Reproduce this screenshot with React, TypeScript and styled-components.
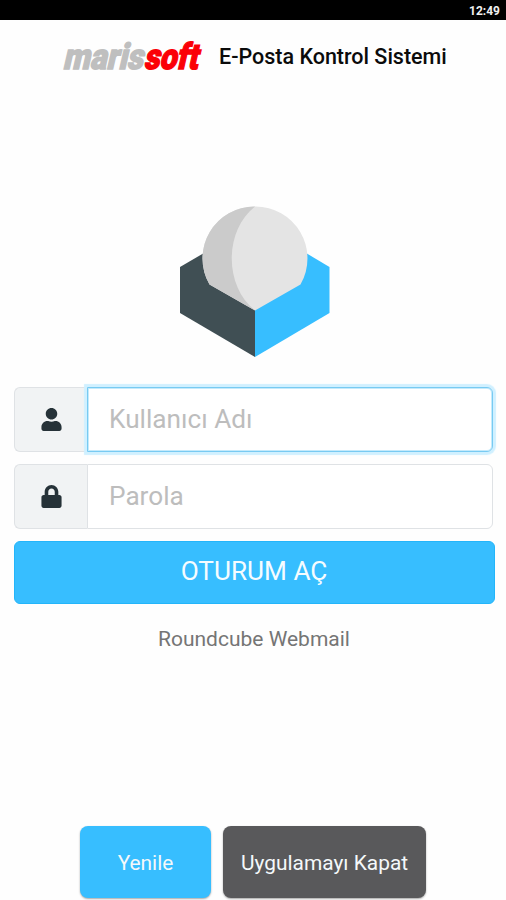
import React from 'react';
import styled, { createGlobalStyle, css } from 'styled-components';
import { FaLock, FaUser } from 'react-icons/fa';

const GlobalStyle = createGlobalStyle`
  *, *::before, *::after { box-sizing: border-box; }
  html, body { margin: 0; background: #fefefe; }
  body { font-family: Roboto, "Liberation Sans", sans-serif; }
`;

const Screen = styled.div`
  display: flex;
  flex-direction: column;
  height: 900px;
  width: 506px;
  overflow: hidden;
  background: #fefefe;
`;

const StatusBar = styled.div`
  display: flex;
  flex: none;
  justify-content: flex-end;
  height: 20px;
  padding-right: 6px;
  background: #000;
  color: #f0f0f0;
  font-size: 12px;
  font-weight: 700;
  line-height: 22px;
`;

const Header = styled.header`
  display: flex;
  flex: none;
  height: 74px;
  padding-left: 60px;
`;

const BrandLogo = styled.svg`
  display: block;
  flex: none;
  width: 146px;
  height: 74px;
  margin-right: 13px;
  overflow: visible;
  font-family: Roboto, sans-serif;
  font-weight: 900;
`;

const Title = styled.h1`
  margin: 0;
  color: #0b0b0b;
  font-size: 21.5px;
  font-weight: 500;
  line-height: 74px;
  white-space: nowrap;
`;

const Emblem = styled.svg`
  display: block;
  flex: none;
  width: 150px;
  height: 152px;
  margin: 112px 0 0 180px;
`;

const LoginForm = styled.form`
  display: flex;
  flex: none;
  flex-direction: column;
  gap: 12px;
  margin: 29px 11px 0 14px;
`;

const Field = styled.div`
  display: flex;
  width: 479px;
  height: 65px;
`;

const FieldIcon = styled.span`
  display: flex;
  align-items: center;
  justify-content: center;
  width: 73px;
  padding-left: 1px;
  border: 1px solid #dfe2e5;
  border-right: 0;
  border-radius: 6px 0 0 6px;
  background: #f1f3f4;
  color: #263238;
  font-size: 23px;
`;

const Input = styled.input<{ $active?: boolean }>`
  flex: 1;
  min-width: 0;
  height: 100%;
  padding: 0 21px 1px;
  border: 1px solid #dfe2e5;
  border-radius: 0 6px 6px 0;
  outline: 0;
  background: #fff;
  font: 400 26.2px Roboto, sans-serif;

  &::placeholder { color: #bdbdbd; opacity: 1; }

  ${({ $active }) => $active && css`
    border-color: #78caf2;
    box-shadow: 0 0 1px 3px #d0f0ff, inset 0 0 0 1px #c4eafb;
  `}
`;

const SubmitButton = styled.button`
  height: 63px;
  padding: 0 1px 3px 0;
  border: 1px solid #23b5fa;
  border-radius: 6px;
  background: #37beff;
  color: #f5fcff;
  font: 400 26.2px Roboto, sans-serif;
`;

const ProductName = styled.p`
  flex: none;
  margin: 21px 0 0;
  padding-left: 2px;
  color: #757575;
  font-size: 21px;
  line-height: 28px;
  text-align: center;
`;

const Actions = styled.footer`
  display: flex;
  flex: none;
  gap: 12px;
  margin: auto 0 2px 80px;
`;

const ActionButton = styled.button<{ $dark?: boolean }>`
  width: ${({ $dark }) => ($dark ? '203px' : '131px')};
  height: 72px;
  padding: 2px 0 0;
  border: 0;
  border-radius: 8px;
  background: ${({ $dark }) => ($dark ? '#59595b' : '#37beff')};
  box-shadow: 0 1px 2px rgba(0, 0, 0, 0.35);
  color: #f4f8fa;
  font: 400 20.9px Roboto, sans-serif;
  white-space: nowrap;
`;

export default function App() {
  return (
    <>
      <GlobalStyle />
      <Screen>
        <StatusBar>12:49</StatusBar>
        <Header>
          <BrandLogo viewBox="0 0 146 74" role="img" aria-label="marissoft">
            <g transform="translate(2.5 49) skewX(-13)" fontSize="36" strokeWidth="1.4">
              <text fill="#bfbfbf" stroke="#bfbfbf" textLength="80" lengthAdjust="spacingAndGlyphs">maris</text>
              <text x="81" fill="#fb0007" stroke="#fb0007" textLength="54" lengthAdjust="spacingAndGlyphs">soft</text>
            </g>
          </BrandLogo>
          <Title>E-Posta Kontrol Sistemi</Title>
        </Header>
        <Emblem viewBox="0 0 150 152" aria-hidden="true">
          <path fill="#404f54" d="M0 61 24 47 75 62V151L0 107Z" />
          <path fill="#37beff" d="M149.5 61 126 47 75 62V151L149.5 107Z" />
          <path fill="#e4e4e4" d="M75 .5A52 52 0 0 1 120.5 78.5L75 104.5 29.5 78.5A52 52 0 0 1 75 .5Z" />
          <path fill="#cbcbcb" d="M75 .5C44 25 44 80 75 104.5L29.5 78.5A52 52 0 0 1 75 .5Z" />
        </Emblem>
        <LoginForm onSubmit={(event) => event.preventDefault()}>
          <Field>
            <FieldIcon><FaUser /></FieldIcon>
            <Input $active placeholder="Kullanıcı Adı" aria-label="Kullanıcı Adı" />
          </Field>
          <Field>
            <FieldIcon><FaLock /></FieldIcon>
            <Input type="password" placeholder="Parola" aria-label="Parola" />
          </Field>
          <SubmitButton>OTURUM AÇ</SubmitButton>
        </LoginForm>
        <ProductName>Roundcube Webmail</ProductName>
        <Actions>
          <ActionButton>Yenile</ActionButton>
          <ActionButton $dark>Uygulamayı Kapat</ActionButton>
        </Actions>
      </Screen>
    </>
  );
}
